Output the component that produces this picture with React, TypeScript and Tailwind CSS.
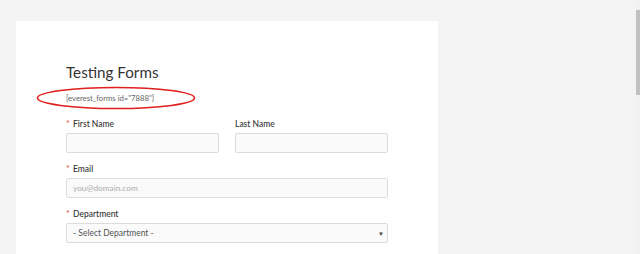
export default function App() {
  return (
    <div
      className="w-[640px] h-[254px] bg-[#f4f4f4] flex overflow-hidden"
      style={{ fontFamily: 'Lato, "Open Sans", sans-serif' }}
    >
      <div className="flex-1 pl-[16px] pt-[21px]">
        {/* Form card */}
        <div className="w-[422px] h-full bg-white pl-[50px] pt-[39px]">
          <h1 className="text-[15.2px] leading-[24px] text-[#333] font-normal">Testing Forms</h1>

          <div className="relative mt-[7px] h-[14px]">
            <p className="text-[7.7px] leading-[14px] text-[#666]">[everest_forms id="7888"]</p>
            <svg
              className="absolute left-[-31px] top-[-5px]"
              width="162"
              height="24"
              viewBox="0 0 162 24"
            >
              <ellipse cx="81" cy="12" rx="78.5" ry="10.5" fill="none" stroke="#e01e1e" strokeWidth="1.6" />
            </svg>
          </div>

          <div className="w-[322px] mt-[13px] flex flex-col gap-[10px]">
            <div className="grid grid-cols-2 gap-x-[16px]">
              <Field label="First Name" required />
              <Field label="Last Name" />
            </div>
            <Field label="Email" required placeholder="you@domain.com" />
            <div>
              <Label text="Department" required />
              <div className="mt-[3px] h-[20px] border border-[#dcdcdc] rounded-[2px] bg-[#fafafa] flex items-center justify-between pl-[6px] pr-[3px]">
                <span className="text-[8.5px] text-[#555]">- Select Department -</span>
                <span className="text-[6px] text-[#444]">▼</span>
              </div>
            </div>
          </div>
        </div>
      </div>

      {/* Scrollbar */}
      <div className="w-[4px] h-full bg-[#f1f1f1] pt-[10px]">
        <div className="w-[4px] h-[85px] bg-[#c1c1c1]" />
      </div>
    </div>
  );
}

function Label({ text, required = false }: { text: string; required?: boolean }) {
  return (
    <div className="flex items-center h-[12px] text-[8.5px] text-[#333] font-medium">
      {required ? <span className="text-[#e04040] w-[7px] font-normal">*</span> : null}
      <span>{text}</span>
    </div>
  );
}

function Field({
  label,
  required = false,
  placeholder = '',
}: {
  label: string;
  required?: boolean;
  placeholder?: string;
}) {
  return (
    <div>
      <Label text={label} required={required} />
      <div className="mt-[3px] h-[20px] border border-[#dcdcdc] rounded-[2px] bg-[#fafafa] flex items-center pl-[6px]">
        <span className="text-[8.3px] text-[#aaa]">{placeholder}</span>
      </div>
    </div>
  );
}
